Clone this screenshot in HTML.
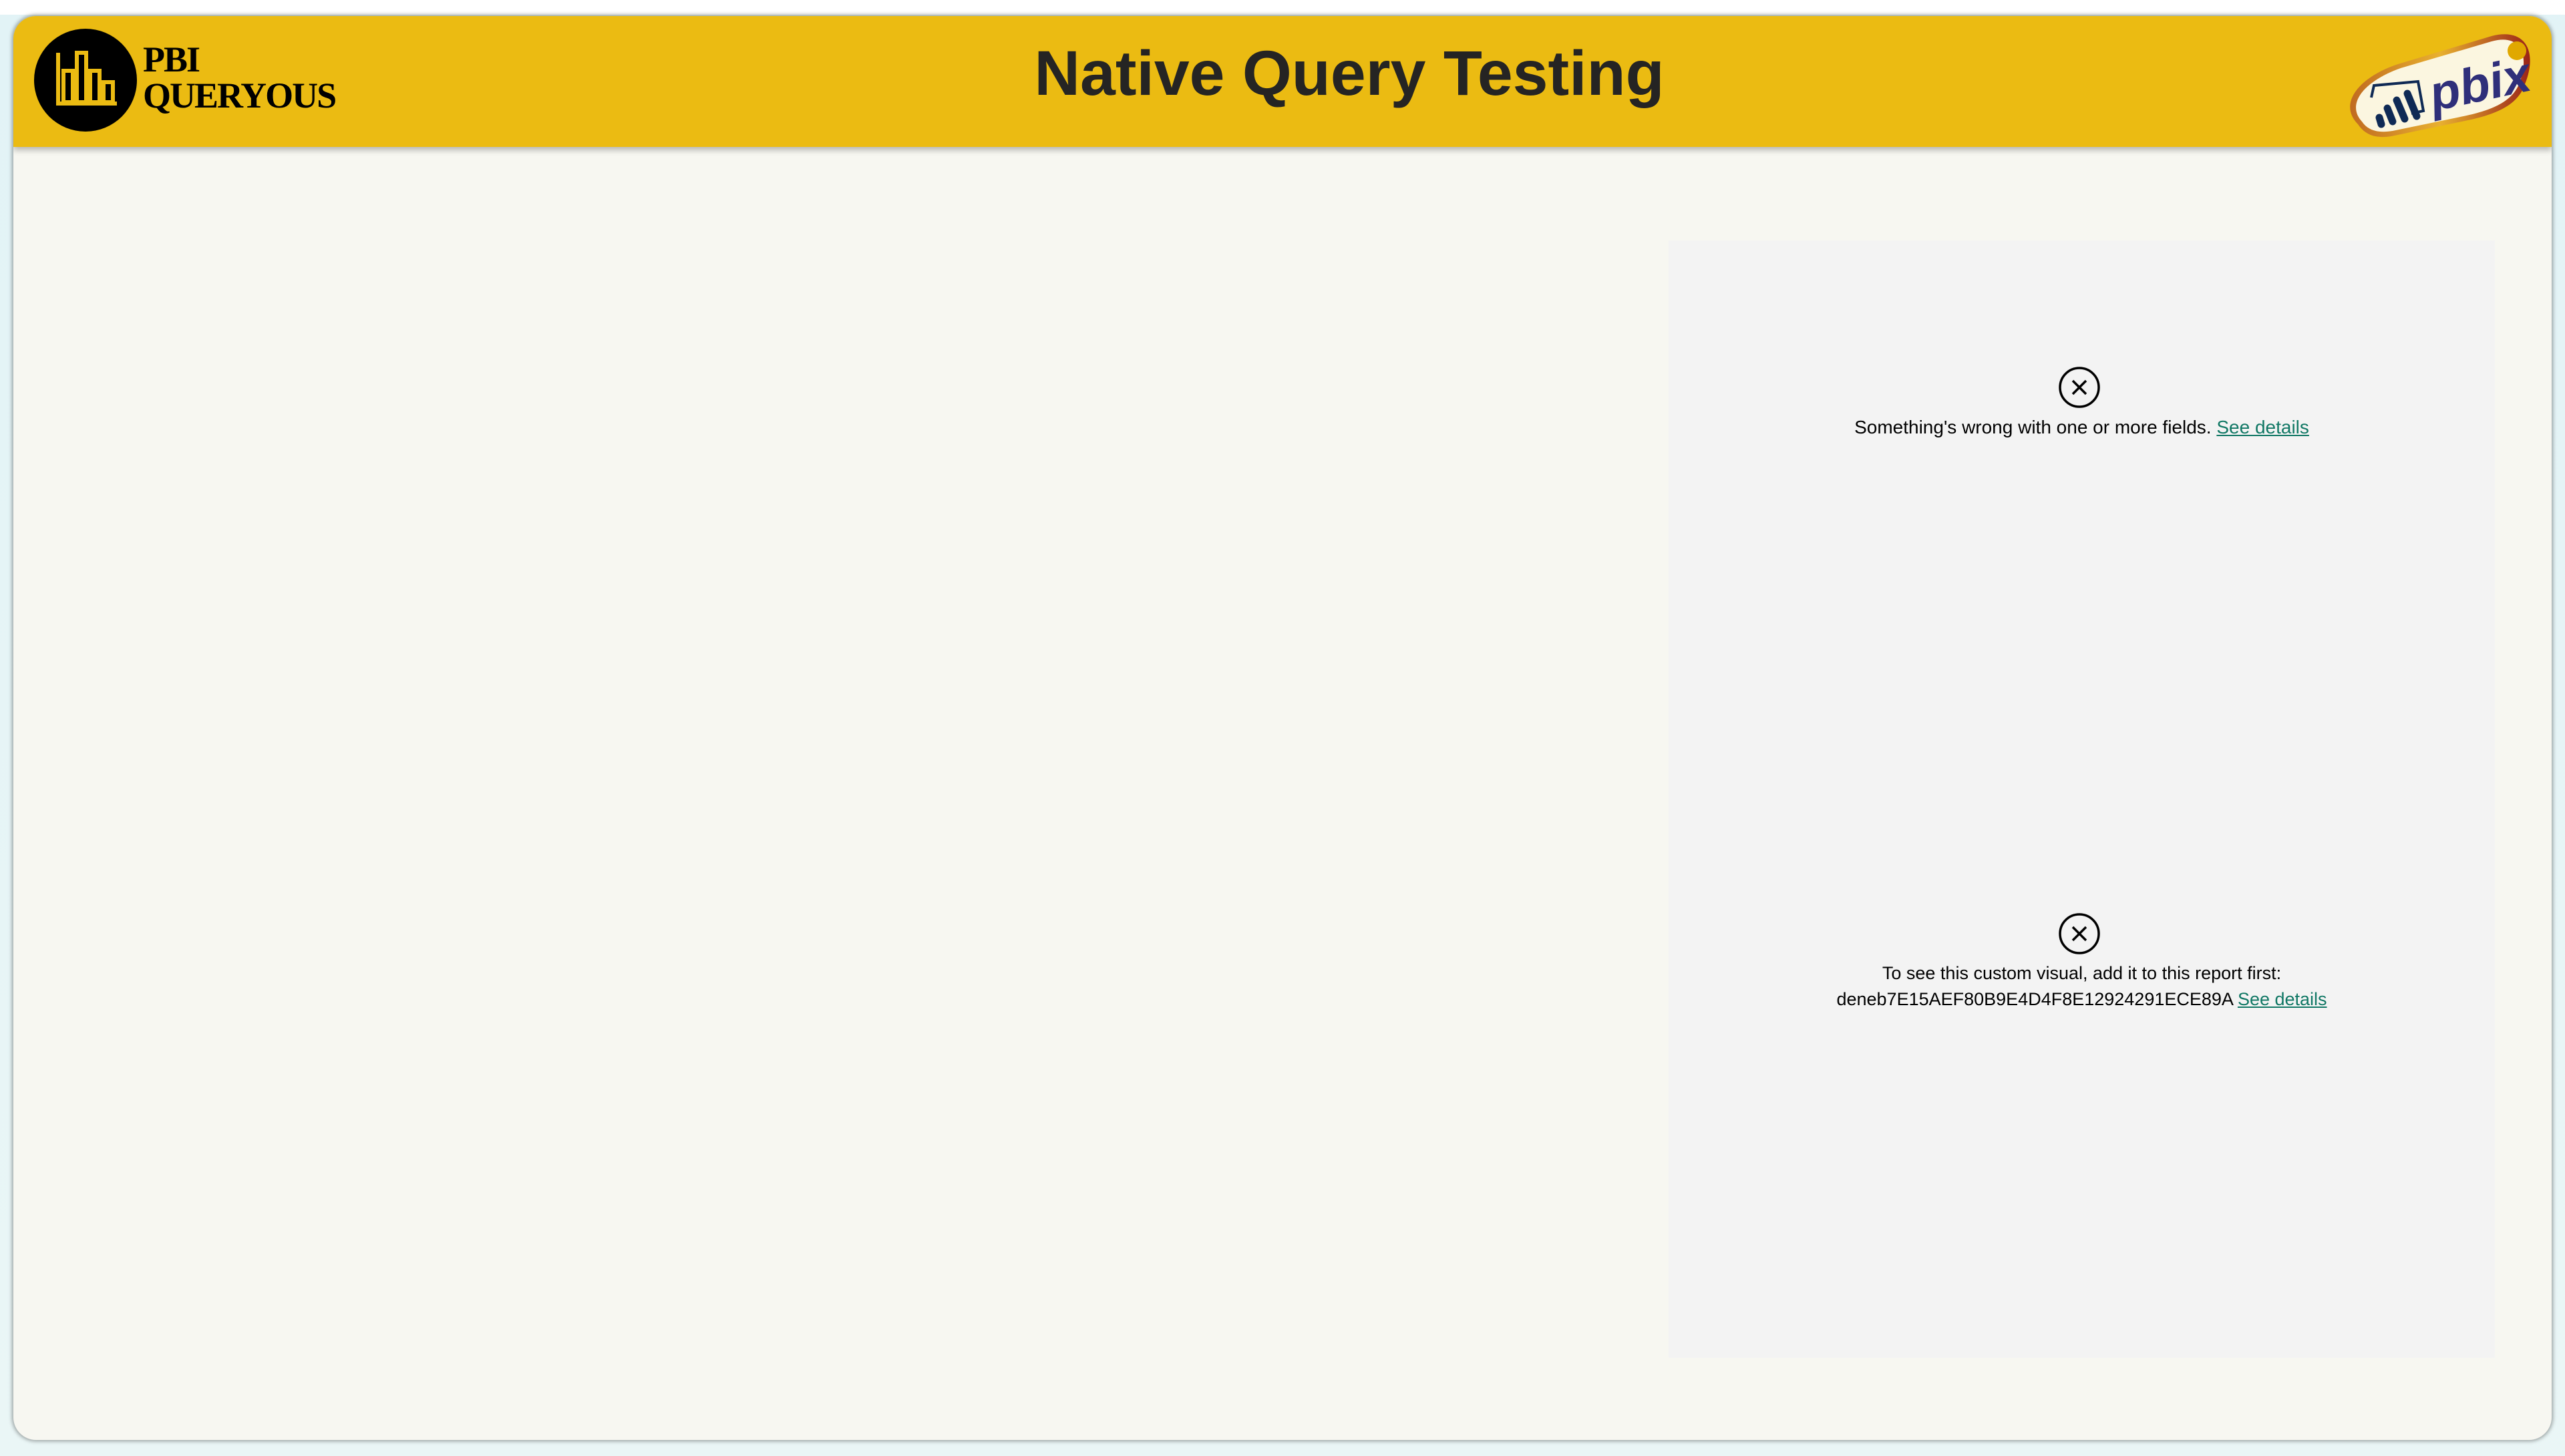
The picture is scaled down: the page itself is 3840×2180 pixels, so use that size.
<!DOCTYPE html>
<html><head><meta charset="utf-8"><style>
html,body{margin:0;padding:0;}
body{width:3840px;height:2180px;background:linear-gradient(#ffffff 0,#ffffff 22px,#e2f3f6 22px,#eaf6f6 100%);position:relative;overflow:hidden;font-family:"Liberation Sans",sans-serif;}
.card{position:absolute;left:20px;top:24px;width:3800px;height:2132px;background:#f7f7f1;border-radius:34px;box-shadow:0 0 6px 2px rgba(0,0,0,0.35);overflow:hidden;}
.hdr{position:absolute;left:0;top:0;width:100%;height:196px;background:#ebbb12;box-shadow:0 5px 8px rgba(0,0,0,0.25);}
.title{position:absolute;left:100px;width:100%;top:31px;text-align:center;font-weight:bold;font-size:95px;color:#252423;line-height:110px;}
.logo{position:absolute;left:31px;top:19px;width:154px;height:154px;border-radius:50%;background:#000;}
.ltxt{position:absolute;left:194px;top:38px;font-family:"Liberation Serif",serif;font-weight:bold;font-size:54px;line-height:54px;color:#000;letter-spacing:-2px;}
.panel{position:absolute;left:2478px;top:336px;width:1237px;height:1673px;background:#f3f3f3;}
.msg{position:absolute;left:0;width:100%;text-align:center;font-size:28px;color:#000;line-height:39px;}
.msg a{color:#117865;text-decoration:underline;}
.ic{position:absolute;left:584px;width:62px;height:62px;}
</style></head><body>
<div class="card">
 <div class="hdr">
  <div class="logo">
   <svg width="154" height="154" viewBox="0 0 154 154">
    <g fill="none" stroke="#ebbb12" stroke-width="6">
     <polyline points="36,36 36,112 124,112"/>
     <rect x="44" y="63" width="14" height="47"/>
     <rect x="64" y="36" width="14" height="74"/>
     <rect x="84" y="63" width="14" height="47"/>
     <rect x="104" y="80" width="14" height="30"/>
    </g>
   </svg>
  </div>
  <div class="ltxt">PBI<br>QUERYOUS</div>
  <div class="title">Native Query Testing</div>
  <svg style="position:absolute;left:3490px;top:12px" width="290" height="180" viewBox="0 0 290 180">
   <defs><linearGradient id="g" x1="0" x2="1"><stop offset="0" stop-color="#c06a20"/><stop offset="0.5" stop-color="#e8b030"/><stop offset="1" stop-color="#9a2418"/></linearGradient></defs>
   <path d="M20 150 C-10 120 20 80 80 60 L220 18 C270 5 290 40 270 90 C260 120 230 135 180 145 L70 168 C45 172 30 165 20 150Z" fill="url(#g)"/>
   <path d="M26 146 C2 120 28 86 84 66 L220 26 C262 14 278 44 262 88 C252 114 226 128 178 138 L72 160 C48 164 34 158 26 146Z" fill="#fbf6e0"/>
   <path d="M40 110 L44 92 L110 86 L118 130 L100 134" fill="none" stroke="#0f2a55" stroke-width="4"/>
   <g stroke="#0f2a55" stroke-width="11" stroke-linecap="round"><line x1="55" y1="150" x2="52" y2="140"/><line x1="72" y1="146" x2="64" y2="126"/><line x1="90" y1="142" x2="78" y2="114"/><line x1="108" y1="138" x2="94" y2="104"/></g>
   <text x="128" y="120" font-family="Liberation Sans,sans-serif" font-style="italic" font-weight="bold" font-size="74" fill="#2f2f7a" transform="rotate(-12 180 100)">pbix</text>
   <circle cx="258" cy="40" r="14" fill="#e0a800"/>
  </svg>
 </div>
 <div class="panel">
  <svg class="ic" style="top:189px" viewBox="0 0 62 62"><circle cx="31" cy="31" r="29" fill="none" stroke="#000" stroke-width="3.5"/><path d="M21 21 L41 41 M41 21 L21 41" stroke="#000" stroke-width="3.5"/></svg>
  <div class="msg" style="top:260px">Something's wrong with one or more fields. <a>See details</a></div>
  <svg class="ic" style="top:1007px" viewBox="0 0 62 62"><circle cx="31" cy="31" r="29" fill="none" stroke="#000" stroke-width="3.5"/><path d="M21 21 L41 41 M41 21 L21 41" stroke="#000" stroke-width="3.5"/></svg>
  <div class="msg" style="top:1078px;font-size:27px">To see this custom visual, add it to this report first:<br>deneb7E15AEF80B9E4D4F8E12924291ECE89A <a>See details</a></div>
 </div>
</div>
</body></html>
